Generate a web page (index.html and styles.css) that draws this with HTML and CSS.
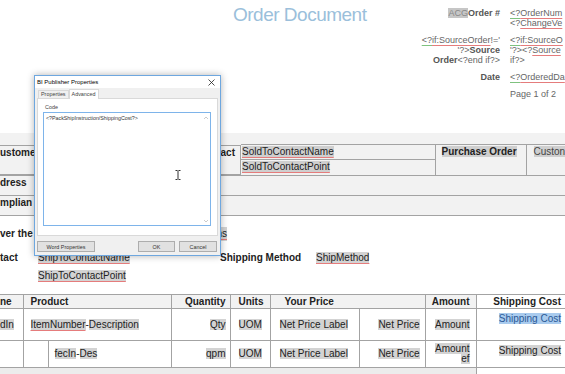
FILE: index.html
```html
<!DOCTYPE html>
<html lang="en">
<head>
    <meta charset="UTF-8">
    <title>Order Document</title>
    <link rel="stylesheet" href="styles.css">
</head>
<body>
    <div class="doc">
        <!-- Cabecera del documento -->
        <header class="head">
            <h1 class="title">Order Document</h1>
            <div class="meta">
                <div class="meta-label"><span class="fld">ACG</span><b>Order #</b></div>
                <div class="meta-value"><span class="g">&lt;?</span><span class="r">OrderNum</span><br>&lt;?<span class="r">ChangeVe</span></div>

                <div class="meta-label"><span class="g">&lt;?</span><span class="r">if:SourceOrder</span>!='<br>'?&gt;<b>Source</b><br><b>Order</b>&lt;?end if?&gt;</div>
                <div class="meta-value"><span class="g">&lt;?</span><span class="r">if:SourceO</span><br>'?&gt;&lt;?<span class="r">Source</span><br>if?&gt;</div>

                <div class="meta-label"><b>Date</b></div>
                <div class="meta-value"><span class="g">&lt;?</span><span class="r">OrderedDa</span></div>

                <div class="meta-label"></div>
                <div class="meta-value">Page 1 of 2</div>
            </div>
        </header>

        <!-- Bloque de cliente -->
        <section class="band">
            <table class="parties">
                <colgroup><col style="width:241px"><col style="width:194px"><col style="width:91px"><col style="width:39px"></colgroup>
                <tr class="row-a">
                    <td class="lbl-cell"><b>ustome</b><b>Contact</b></td>
                    <td class="split">
                        <div class="sub"><span class="fld r">SoldToContactName</span></div>
                        <div class="sub"><span class="fld r">SoldToContactPoint</span></div>
                    </td>
                    <td class="po"><b class="fld">Purchase Order</b></td>
                    <td class="cpo"><span class="fld">Custon</span></td>
                </tr>
                <tr class="row-b"><td colspan="4"><b>dress</b></td></tr>
                <tr class="row-b"><td colspan="4"><b>mplian</b></td></tr>
            </table>
        </section>

        <!-- Entrega -->
        <div class="delivery"><b>ver the</b><span class="fld r">ShipInstructions</span></div>

        <div class="shipping">
            <b>tact</b>
            <span><span class="fld r">ShipToContactName</span></span>
            <b>Shipping Method</b>
            <span><span class="fld r">ShipMethod</span></span>
            <span></span>
            <span><span class="fld r">ShipToContactPoint</span></span>
        </div>

        <!-- Lineas del pedido -->
        <table class="lines">
            <colgroup>
                <col style="width:23px"><col style="width:25px"><col style="width:123px">
                <col style="width:59px"><col style="width:40px"><col style="width:89px">
                <col style="width:66px"><col style="width:51px"><col style="width:89px">
            </colgroup>
            <tr class="hdr">
                <th class="c-first">ne</th>
                <th colspan="2" class="c-prod">Product</th>
                <th class="c-num">Quantity</th>
                <th class="c-uom">Units</th>
                <th colspan="2" class="c-price">Your Price</th>
                <th class="c-amt">Amount</th>
                <th class="c-ship">Shipping Cost</th>
            </tr>
            <tr class="item">
                <td class="c-first"><span class="fld">dIn</span></td>
                <td colspan="2" class="c-prod"><span class="fld r">ItemNumber</span>-<span class="fld">Description</span></td>
                <td class="c-num"><span class="fld">Qty</span></td>
                <td class="c-uom"><span class="fld">UOM</span></td>
                <td class="c-lbl"><span class="fld">Net Price Label</span></td>
                <td class="c-np"><span class="fld">Net Price</span></td>
                <td class="c-amt"><span class="fld">Amount</span></td>
                <td class="c-ship top"><span class="sel">Shipping Cost</span></td>
            </tr>
            <tr class="item sub-item">
                <td class="c-first"></td>
                <td></td>
                <td class="c-sub"><span class="fld">fecIn</span>-<span class="fld">Des</span></td>
                <td class="c-num"><span class="fld">qpm</span></td>
                <td class="c-uom"><span class="fld">UOM</span></td>
                <td class="c-lbl"><span class="fld">Net Price Label</span></td>
                <td class="c-np"><span class="fld">Net Price</span></td>
                <td class="c-amt two"><span class="fld">Amount</span><br><span class="fld">ef</span></td>
                <td class="c-ship top"><span class="fld">Shipping Cost</span></td>
            </tr>
            <tr class="next">
                <td colspan="8"></td>
                <td class="c-ship"></td>
            </tr>
        </table>
    </div>

    <!-- Dialogo BI Publisher -->
    <div class="dialog">
        <div class="dialog-title">
            <span>BI Publisher Properties</span>
            <svg class="close" width="7" height="7" viewBox="0 0 7 7"><path d="M0.5 0.5 L6.5 6.5 M6.5 0.5 L0.5 6.5" stroke="#222" stroke-width="0.8"/></svg>
        </div>
        <div class="tabs">
            <span class="tab">Properties</span>
            <span class="tab active">Advanced</span>
        </div>
        <div class="tab-panel">
            <div class="code-label">Code</div>
            <div class="code-box">
                <div class="code-text">&lt;?PackShipInstruction/ShippingCost?&gt;</div>
                <div class="scroll">
                    <svg width="6" height="4" viewBox="0 0 6 4"><path d="M1 3 L3 1 L5 3" fill="none" stroke="#b5b5b5" stroke-width="0.7"/></svg>
                    <svg width="6" height="4" viewBox="0 0 6 4"><path d="M1 1 L3 3 L5 1" fill="none" stroke="#b5b5b5" stroke-width="0.7"/></svg>
                </div>
            </div>
        </div>
        <div class="dialog-buttons">
            <button class="btn btn-word">Word Properties</button>
            <button class="btn btn-ok">OK</button>
            <button class="btn btn-cancel">Cancel</button>
        </div>
    </div>

    <svg class="ibeam" width="6" height="10" viewBox="0 0 6 10"><path d="M0.5 0.5 H2.5 M3.5 0.5 H5.5 M3 0.8 V9.2 M0.5 9.5 H2.5 M3.5 9.5 H5.5" fill="none" stroke="#333" stroke-width="1"/></svg>
</body>
</html>
```

FILE: styles.css
```css
/* Estilos generales */
* {
    margin: 0;
    padding: 0;
    box-sizing: border-box;
}

html {
    overflow: hidden;
}

body {
    width: 565px;
    height: 374px;
    overflow: hidden;
    position: relative;
    background: #fff;
    color: #222;
    font-family: "Liberation Sans", Arial, sans-serif;
}

b {
    font-weight: bold;
}

/* Campos de Word */
.fld {
    background: #d3d3d3;
}

.r {
    text-decoration: underline;
    text-decoration-color: #e57c7c;
    text-underline-offset: 2px;
}

.g {
    text-decoration: underline;
    text-decoration-color: #7fc27f;
    text-underline-offset: 2px;
}

/* Cabecera */
.head {
    display: flex;
    height: 133px;
}

.title {
    flex: none;
    width: 410px;
    padding-left: 233px;
    padding-top: 4px;
    font-size: 19px;
    line-height: 22px;
    font-weight: normal;
    letter-spacing: -0.5px;
    color: #9bbfdb;
    white-space: nowrap;
}

.meta {
    flex: none;
    display: grid;
    grid-template-columns: 90px 55px;
    grid-auto-rows: min-content;
    column-gap: 10px;
    row-gap: 7px;
    padding-top: 8px;
    font-size: 9px;
    line-height: 10px;
    color: #666;
    white-space: nowrap;
}

.meta-label {
    text-align: right;
}

.meta-label b {
    color: #555;
}

.meta-label .fld {
    background: #c6c6c6;
    color: #888;
}

/* Banda gris de cliente */
.band {
    background: #f2f2f2;
    padding-top: 11px;
}

.parties {
    width: 565px;
    table-layout: fixed;
    border-collapse: collapse;
    font-size: 10px;
    line-height: 14px;
}

.parties td {
    border-top: 1px solid #a3a3a3;
    border-bottom: 1px solid #a3a3a3;
    vertical-align: top;
    white-space: nowrap;
    overflow: hidden;
    padding: 0;
}

.parties .fld {
    background: #cfcfcf;
}

.row-a td {
    height: 30px;
}

.row-b td {
    height: 20px;
}

.lbl-cell {
    display: flex;
    justify-content: space-between;
    padding-right: 5px !important;
    border-right: 1px solid #a3a3a3;
}

.split {
    border-right: 1px solid #a3a3a3;
}

.split .sub {
    height: 15px;
    padding-left: 1px;
}

.split .sub:first-child {
    border-bottom: 1px solid #a3a3a3;
}

.po {
    padding-left: 6px !important;
    border-right: 1px solid #a3a3a3;
}

.cpo {
    padding-left: 7px !important;
    color: #444;
}

/* Entrega */
.delivery {
    display: flex;
    justify-content: space-between;
    width: 227px;
    margin-top: 11px;
    font-size: 10px;
    line-height: 14px;
}

.shipping {
    display: grid;
    grid-template-columns: 38px 182px 96px auto;
    row-gap: 4px;
    margin-top: 10px;
    font-size: 10px;
    line-height: 14px;
    white-space: nowrap;
}

/* Tabla de lineas */
.lines {
    width: 565px;
    margin-top: 11px;
    table-layout: fixed;
    border-collapse: collapse;
    font-size: 10px;
    line-height: 12px;
    white-space: nowrap;
}

.lines th,
.lines td {
    border: 1px solid #a3a3a3;
    padding: 0;
    overflow: hidden;
    text-align: left;
    vertical-align: middle;
}

.lines tr > :first-child {
    border-left: none;
}

.lines tr > :last-child {
    border-right: none;
}

.hdr th {
    height: 14px;
    background: #f2f2f2;
    font-weight: bold;
}

.hdr .c-ship {
    background: #fff;
}

.item td {
    height: 32px;
}

.sub-item td {
    height: 27px;
}

.c-prod {
    padding-left: 7px !important;
}

.c-sub {
    padding-left: 6px !important;
}

.c-num {
    text-align: right !important;
    padding-right: 4px !important;
}

.c-uom {
    padding-left: 8px !important;
}

th.c-price {
    padding-left: 14px !important;
}

.c-lbl {
    padding-left: 9px !important;
}

.c-np {
    text-align: right !important;
    padding-right: 5px !important;
}

.c-amt {
    text-align: right !important;
    padding-right: 6px !important;
}

.c-amt.two {
    line-height: 10px;
}

.c-ship {
    text-align: right !important;
    padding-right: 4px !important;
}

.c-ship.top {
    vertical-align: top !important;
    padding-top: 4px !important;
}

.sel {
    background: #a9cbee;
    color: #2b5996;
}

.next td {
    height: 8px;
    border-bottom: none;
    background: #ececec;
}

.next .c-ship {
    background: #fff;
}

/* Dialogo */
.dialog {
    position: absolute;
    left: 34px;
    top: 75px;
    width: 187px;
    height: 181px;
    background: #f0f0f0;
    border: 1px solid #6ea7df;
    box-shadow: 0 0 7px rgba(0, 0, 0, 0.3);
    font-size: 5.4px;
    color: #333;
    display: flex;
    flex-direction: column;
}

.dialog-title {
    height: 12px;
    background: #fff;
    display: flex;
    align-items: center;
    justify-content: space-between;
    padding: 0 5px 0 2px;
    font-size: 6px;
    color: #000;
}

.tabs {
    display: flex;
    align-items: flex-end;
    height: 10px;
    padding-left: 3px;
}

.tab {
    height: 8px;
    line-height: 7px;
    padding: 0 2px;
    border: 1px solid #d9d9d9;
    border-bottom: none;
    color: #444;
}

.tab.active {
    height: 10px;
    line-height: 9px;
    background: #fff;
    margin-bottom: -1px;
    position: relative;
}

.tab-panel {
    margin: 0 2px;
    height: 138px;
    background: #fff;
    border: 1px solid #d9d9d9;
    padding: 5px 6px 0 5px;
}

.code-label {
    line-height: 7px;
    padding-left: 2px;
    margin-bottom: 1px;
    color: #444;
}

.code-box {
    height: 114px;
    border: 1px solid #7eb4ea;
    display: flex;
    justify-content: space-between;
}

.code-text {
    padding: 2px 2px;
    font-size: 5.3px;
    line-height: 6px;
    color: #333;
}

.scroll {
    width: 8px;
    display: flex;
    flex-direction: column;
    justify-content: space-between;
    align-items: center;
    padding: 3px 0 2px;
}

.dialog-buttons {
    display: flex;
    padding: 5px 3px 0 2px;
}

.btn {
    height: 11px;
    background: #e1e1e1;
    border: 1px solid #adadad;
    font-family: "Liberation Sans", Arial, sans-serif;
    font-size: 5.4px;
    color: #333;
}

.btn-word {
    width: 58px;
}

.btn-ok {
    width: 37px;
    margin-left: auto;
}

.btn-cancel {
    width: 38px;
    margin-left: 4px;
}

.ibeam {
    position: absolute;
    left: 175px;
    top: 170px;
}
```
